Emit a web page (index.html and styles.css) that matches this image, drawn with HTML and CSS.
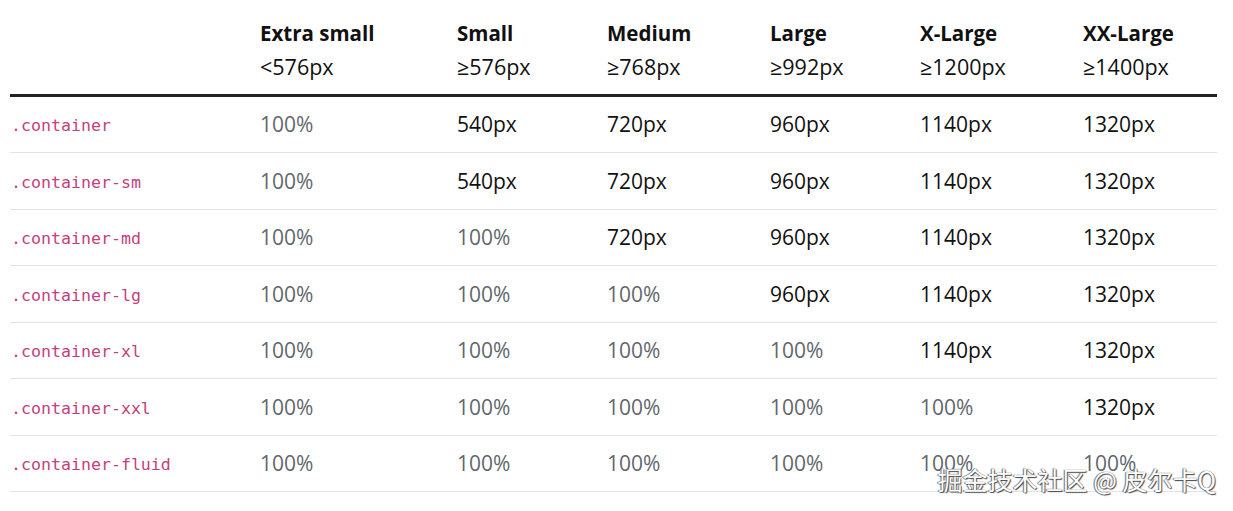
FILE: index.html
```html
<!DOCTYPE html>
<html>
<head>
<meta charset="utf-8">
<link rel="stylesheet" href="styles.css">
</head>
<body>
<div class="page">
<table class="grid">
  <colgroup>
    <col class="c0"><col class="c1"><col class="c2"><col class="c3"><col class="c4"><col class="c5"><col class="c6">
  </colgroup>
  <thead>
    <tr>
      <th></th>
      <th><span class="t">Extra small</span><span class="s">&lt;576px</span></th>
      <th><span class="t">Small</span><span class="s">≥576px</span></th>
      <th><span class="t">Medium</span><span class="s">≥768px</span></th>
      <th><span class="t">Large</span><span class="s">≥992px</span></th>
      <th><span class="t">X-Large</span><span class="s">≥1200px</span></th>
      <th><span class="t">XX-Large</span><span class="s">≥1400px</span></th>
    </tr>
  </thead>
  <tbody>
    <tr><td><code>.container</code></td><td class="m">100%</td><td>540px</td><td>720px</td><td>960px</td><td>1140px</td><td>1320px</td></tr>
    <tr><td><code>.container-sm</code></td><td class="m">100%</td><td>540px</td><td>720px</td><td>960px</td><td>1140px</td><td>1320px</td></tr>
    <tr><td><code>.container-md</code></td><td class="m">100%</td><td class="m">100%</td><td>720px</td><td>960px</td><td>1140px</td><td>1320px</td></tr>
    <tr><td><code>.container-lg</code></td><td class="m">100%</td><td class="m">100%</td><td class="m">100%</td><td>960px</td><td>1140px</td><td>1320px</td></tr>
    <tr><td><code>.container-xl</code></td><td class="m">100%</td><td class="m">100%</td><td class="m">100%</td><td class="m">100%</td><td>1140px</td><td>1320px</td></tr>
    <tr><td><code>.container-xxl</code></td><td class="m">100%</td><td class="m">100%</td><td class="m">100%</td><td class="m">100%</td><td class="m">100%</td><td>1320px</td></tr>
    <tr><td><code>.container-fluid</code></td><td class="m">100%</td><td class="m">100%</td><td class="m">100%</td><td class="m">100%</td><td class="m">100%</td><td class="m">100%</td></tr>
  </tbody>
</table>
<div class="wm">掘金技术社区 @ 皮尔卡Q</div>
</div>
</body>
</html>
```

FILE: styles.css
```css
html, body {
  margin: 0;
  padding: 0;
  background: #fff;
}
.page {
  position: relative;
  width: 1233px;
  height: 511px;
  padding: 0 16px 0 10px;
  box-sizing: border-box;
  font-family: "Open Sans", "Noto Sans", sans-serif;
  color: #111;
  overflow: hidden;
}
.grid {
  width: 1207px;
  border-collapse: collapse;
  table-layout: fixed;
}
.c0 { width: 250px; }
.c1 { width: 197px; }
.c2 { width: 150px; }
.c3 { width: 163px; }
.c4 { width: 150px; }
.c5 { width: 163px; }
.c6 { width: 134px; }
th {
  text-align: left;
  padding: 16.5px 0 11px 0;
  border-bottom: 3px solid #222;
  vertical-align: top;
}
th .t {
  display: block;
  font-weight: 700;
  font-size: 20.5px;
  line-height: 33px;
}
th .s {
  display: block;
  font-weight: 400;
  font-size: 21.5px;
  line-height: 33px;
}
td {
  padding: 0;
  height: 55.5px;
  vertical-align: middle;
  line-height: 24px;
  font-size: 21px;
  border-bottom: 1px solid #e2e3e5;
  color: #111;
}
td.m {
  color: #62676c;
}
code {
  display: inline-block;
  vertical-align: middle;
  line-height: 20px;
  font-family: "DejaVu Sans Mono", "Liberation Mono", monospace;
  font-size: 16.6px;
  color: #c4417e;
  padding-left: 1px;
}
.wm {
  position: absolute;
  right: 17px;
  top: 463px;
  font-family: "Noto Sans CJK SC", sans-serif;
  font-size: 25px;
  line-height: 32px;
  color: #fff;
  text-shadow: 0 0 1px #555, 1px 1px 1px #444, -1px 0 1px #777;
  white-space: pre;
}
```
